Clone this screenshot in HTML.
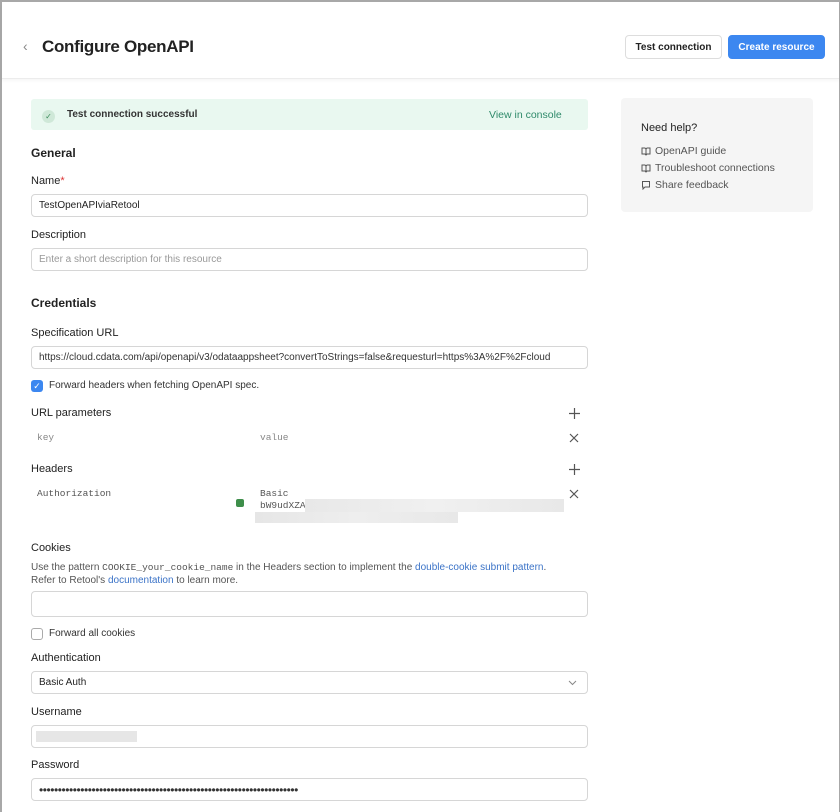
<!DOCTYPE html>
<html><head><style>
*{box-sizing:border-box;margin:0;padding:0}
body{width:840px;height:812px;overflow:hidden;background:#fff;font-family:"Liberation Sans",sans-serif;color:#222;font-size:11px;position:relative}
.frame{position:absolute;inset:0;border:2px solid #a8a8a8;border-right-width:1px;border-bottom:none}
.abs{position:absolute}
.hdr{position:absolute;left:2px;top:2px;right:1px;height:77px;border-bottom:1px solid #ececec;box-shadow:0 2px 3px rgba(0,0,0,.04)}
.lbl{position:absolute;left:31px;font-size:11px;color:#222}
.sec{position:absolute;left:31px;font-size:12px;font-weight:bold;color:#222}
.inp{position:absolute;left:31px;width:557px;border:1px solid #d6d6d6;border-radius:4px;height:23px;font-size:10px;padding:0 7px;line-height:21px;color:#333;white-space:nowrap;overflow:hidden}
.mono{font-family:"Liberation Mono",monospace;font-size:9.5px;color:#555}
.btn{position:absolute;top:35px;height:24px;border-radius:4px;font-size:10px;font-weight:bold;line-height:23px;text-align:center}
.help{position:absolute;left:641px;font-size:10.5px;color:#555}
.help svg{vertical-align:-2px;margin-right:4px}
.x{position:absolute;left:569px;top:0}
.plus{position:absolute;left:569px}
a{color:#3b73c7;text-decoration:none}
</style></head><body>
<div class="frame"></div>
<div class="hdr"></div>
<div class="abs" style="left:23px;top:38px;font-size:14px;color:#888">‹</div>
<div class="abs" style="left:42px;top:37px;font-size:17px;font-weight:bold;color:#222;letter-spacing:-0.3px">Configure OpenAPI</div>
<div class="btn" style="left:625px;width:97px;border:1px solid #ddd;color:#222">Test connection</div>
<div class="btn" style="left:728px;width:97px;background:#3c87f0;color:#fff;border:1px solid #3c87f0">Create resource</div>

<div class="abs" style="left:31px;top:99px;width:557px;height:31px;background:#e9f8f0;border-radius:3px"></div>
<div class="abs" style="left:42px;top:110px;width:13px;height:13px;border-radius:50%;background:#cfe8d8;color:#3a8a5a;font-size:8px;text-align:center;line-height:13px">✓</div>
<div class="abs" style="left:67px;top:109px;font-size:10px;font-weight:bold;color:#333">Test connection successful</div>
<div class="abs" style="left:489px;top:109px;font-size:10.5px;color:#2f8a6a">View in console</div>

<div class="abs" style="left:621px;top:98px;width:192px;height:114px;background:#f5f5f5;border-radius:4px"></div>
<div class="abs" style="left:641px;top:122px;font-size:11px;color:#222">Need help?</div>
<div class="help" style="top:145px"><svg width="10" height="10" viewBox="0 0 10 10" fill="none" stroke="#555" stroke-width="1"><path d="M1 2h3l1 1 1-1h3v6H6l-1 1-1-1H1z M5 3v6"/></svg>OpenAPI guide</div>
<div class="help" style="top:162px"><svg width="10" height="10" viewBox="0 0 10 10" fill="none" stroke="#555" stroke-width="1"><path d="M1 2h3l1 1 1-1h3v6H6l-1 1-1-1H1z M5 3v6"/></svg>Troubleshoot connections</div>
<div class="help" style="top:179px"><svg width="10" height="10" viewBox="0 0 10 10" fill="none" stroke="#555" stroke-width="1"><path d="M1.5 1.5h7v5.5H4L2 9V7H1.5z"/></svg>Share feedback</div>

<div class="sec" style="top:146px">General</div>
<div class="lbl" style="top:175px">Name<span style="color:#d33">*</span></div>
<div class="inp" style="top:194px;color:#222">TestOpenAPIviaRetool</div>
<div class="lbl" style="top:229px">Description</div>
<div class="inp" style="top:248px;color:#999">Enter a short description for this resource</div>
<div class="sec" style="top:296px">Credentials</div>
<div class="lbl" style="top:327px">Specification URL</div>
<div class="inp" style="top:346px">https://cloud.cdata.com/api/openapi/v3/odataappsheet?convertToStrings=false&amp;requesturl=https%3A%2F%2Fcloud</div>
<div class="abs" style="left:31px;top:380px;width:12px;height:12px;border-radius:3px;background:#3c87f0;color:#fff;font-size:9px;text-align:center;line-height:12px">✓</div>
<div class="abs" style="left:49px;top:380px;font-size:10px;color:#333">Forward headers when fetching OpenAPI spec.</div>
<div class="lbl" style="top:407px">URL parameters</div>
<svg class="plus" style="top:408px" width="11" height="11" stroke="#555" stroke-width="1.2"><path d="M5.5 0v11M0 5.5h11"/></svg>
<div class="abs mono" style="left:37px;top:432px;color:#888">key</div>
<div class="abs mono" style="left:260px;top:432px;color:#888">value</div>
<svg class="x" style="top:433px" width="10" height="10" stroke="#555" stroke-width="1.2"><path d="M1 1l8 8M9 1l-8 8"/></svg>
<div class="lbl" style="top:463px">Headers</div>
<svg class="plus" style="top:464px" width="11" height="11" stroke="#555" stroke-width="1.2"><path d="M5.5 0v11M0 5.5h11"/></svg>
<div class="abs mono" style="left:37px;top:488px">Authorization</div>
<div class="abs" style="left:236px;top:499px;width:8px;height:8px;background:#3e8e4a;border-radius:2px"></div>
<div class="abs mono" style="left:260px;top:488px">Basic</div>
<div class="abs mono" style="left:260px;top:500px">bW9udXZA</div>
<div class="abs" style="left:305px;top:499px;width:259px;height:13px;background:linear-gradient(90deg,#e8e8e8,#f0f0f0,#e8e8e8)"></div>
<div class="abs" style="left:255px;top:512px;width:203px;height:11px;background:linear-gradient(90deg,#e6e6e6,#eee,#e8e8e8)"></div>
<svg class="x" style="top:489px" width="10" height="10" stroke="#555" stroke-width="1.2"><path d="M1 1l8 8M9 1l-8 8"/></svg>
<div class="lbl" style="top:542px">Cookies</div>
<div class="abs" style="left:31px;top:561px;width:518px;font-size:10px;line-height:13px;color:#555">Use the pattern <span class="mono">COOKIE_your_cookie_name</span> in the Headers section to implement the <a>double-cookie submit pattern</a>. Refer to Retool's <a>documentation</a> to learn more.</div>
<div class="inp" style="top:591px;height:26px"></div>
<div class="abs" style="left:31px;top:628px;width:12px;height:12px;border-radius:3px;border:1px solid #aaa"></div>
<div class="abs" style="left:49px;top:628px;font-size:10px;color:#333">Forward all cookies</div>
<div class="lbl" style="top:652px">Authentication</div>
<div class="inp" style="top:671px;color:#222">Basic Auth<svg style="position:absolute;right:10px;top:8px" width="9" height="6" stroke="#888" fill="none"><path d="M1 1l3.5 3.5L8 1"/></svg></div>
<div class="lbl" style="top:706px">Username</div>
<div class="inp" style="top:725px"></div>
<div class="abs" style="left:36px;top:731px;width:101px;height:11px;background:#e6e6e6"></div>
<div class="lbl" style="top:759px">Password</div>
<div class="inp" style="top:778px;color:#333;font-size:12px;letter-spacing:-0.45px;line-height:22px">•••••••••••••••••••••••••••••••••••••••••••••••••••••••••••••••••••••</div>
</body></html>
